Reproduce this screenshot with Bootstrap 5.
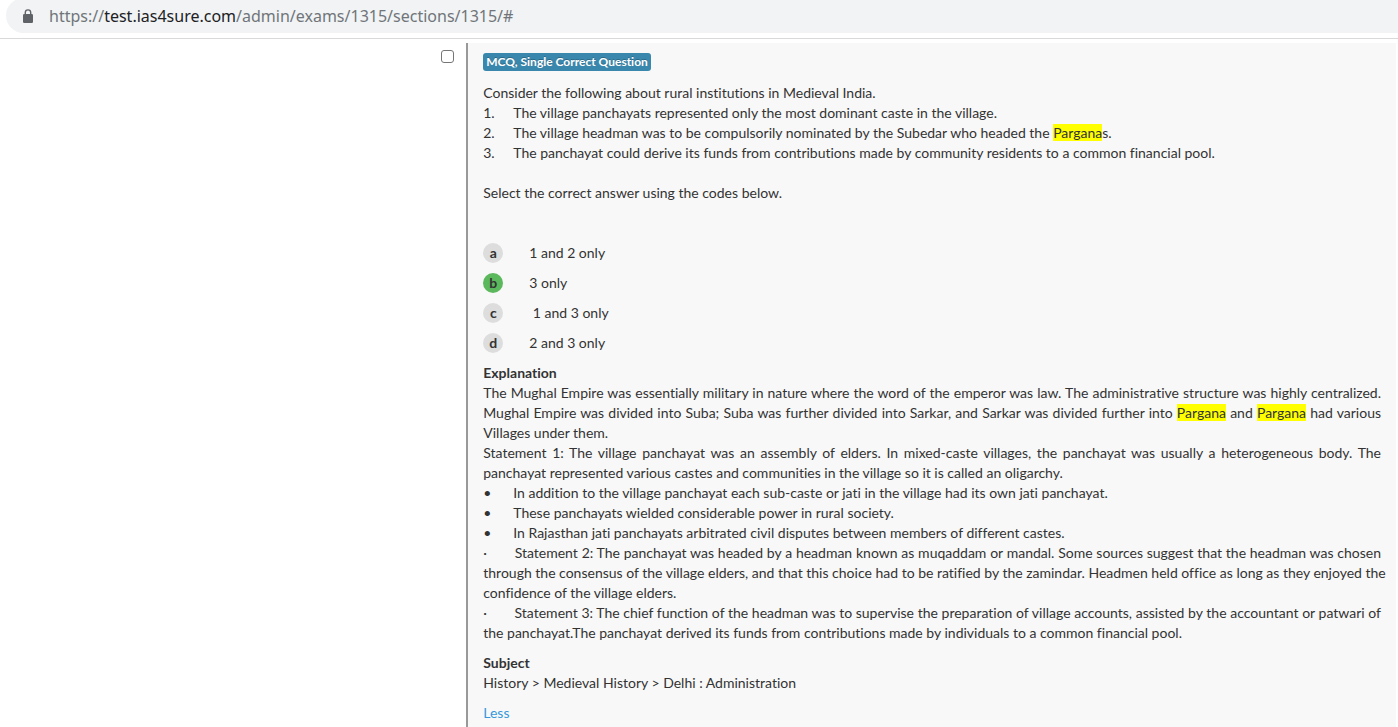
<!DOCTYPE html>
<html lang="en">
<head>
<meta charset="utf-8">
<meta name="viewport" content="width=device-width, initial-scale=1">
<title>Exam sections</title>
<link href="https://cdn.jsdelivr.net/npm/bootstrap@5.3.0/dist/css/bootstrap.min.css" rel="stylesheet">
<style>
  body { font-family: Lato, sans-serif; font-size: 14px; line-height: 20px; font-variant-ligatures: none; color: #333; background: #fff; }
  .browser-bar { height: 39px; border-bottom: 1px solid #d9d9d9; padding-left: 6px; overflow: hidden; }
  .omnibox { height: 35px; margin-top: -2px; padding-left: 17px; gap: 16px; background: #f1f3f4; border-radius: 18px 0 0 18px; }
  .omnibox a { font-family: "Noto Sans", sans-serif; font-size: 16px; line-height: 24px; color: #70757a; }
  .omnibox a span { color: #202124; }
  .content-row { padding: 4px 2px 0 0; }
  .select-cell { width: 33.4%; padding: 7px 12px 0 0; }
  .select-cell .form-check-input { width: 13px; height: 13px; margin: 0; border: 1px solid #767676; border-radius: 3px; }
  .question-panel { min-width: 0; padding: 10px 15px 4px; background: #f8f8f8; border-left: 2px solid #999; }
  .type-label { padding: 2px 3px; font-size: 12px; line-height: 14px; border-radius: 3px; background: #3a87ad; color: #fff; text-shadow: 0 -1px 0 rgba(0,0,0,.25); }
  .type-row { margin-bottom: 12px; }
  .question-ask { margin: 20px 0 40px; }
  .hit { background: #ff0; }
  .marker { width: 30px; flex: none; }
  .option-key { width: 20px; height: 20px; margin-right: 26px; border-radius: 50%; background: #ddd; font-weight: 700; text-align: center; flex: none; }
  .option-key.correct { background: #5cb85c; }
  .options { gap: 10px; margin-bottom: 10px; }
  .explanation p { text-align: justify; }
  .dot-gap { display: inline-block; width: 24px; }
  .subject { margin: 10px 0; }
  .less-link { color: #3498db; }
</style>
</head>
<body class="d-flex flex-column min-vh-100">
<header class="browser-bar">
  <div class="omnibox d-flex align-items-center">
    <svg width="10" height="14" viewBox="0 0 10 14" aria-hidden="true"><path d="M2.3 6V3.6a2.7 2.7 0 0 1 5.4 0V6" fill="none" stroke="#5f6368" stroke-width="1.4"/><rect x="0" y="5" width="10" height="9" rx="1.2" fill="#5f6368"/></svg>
    <a href="#" class="text-decoration-none text-nowrap">https://<span>test.ias4sure.com</span>/admin/exams/1315/sections/1315/#</a>
  </div>
</header>
<main class="content-row d-flex flex-grow-1">
  <div class="select-cell d-flex justify-content-end flex-shrink-0">
    <input class="form-check-input" type="checkbox" aria-label="Select question">
  </div>
  <article class="question-panel flex-grow-1">
    <div class="type-row d-flex"><span class="type-label fw-bold">MCQ, Single Correct Question</span></div>
    <section>
      <p class="m-0">Consider the following about rural institutions in Medieval India.</p>
      <ol class="list-unstyled m-0">
        <li class="d-flex"><span class="marker">1.</span><span>The village panchayats represented only the most dominant caste in the village.</span></li>
        <li class="d-flex"><span class="marker">2.</span><span>The village headman was to be compulsorily nominated by the Subedar who headed the <span class="hit">Pargana</span>s.</span></li>
        <li class="d-flex"><span class="marker">3.</span><span>The panchayat could derive its funds from contributions made by community residents to a common financial pool.</span></li>
      </ol>
      <p class="question-ask">Select the correct answer using the codes below.</p>
    </section>
    <ul class="options list-unstyled d-flex flex-column">
      <li class="d-flex"><span class="option-key">a</span><span>1 and 2 only</span></li>
      <li class="d-flex"><span class="option-key correct">b</span><span>3 only</span></li>
      <li class="d-flex"><span class="option-key">c</span><span>&nbsp;1 and 3 only</span></li>
      <li class="d-flex"><span class="option-key">d</span><span>2 and 3 only</span></li>
    </ul>
    <section class="explanation">
      <div class="fw-bold">Explanation</div>
      <p class="m-0">The Mughal Empire was essentially military in nature where the word of the emperor was law. The administrative structure was highly centralized. Mughal Empire was divided into Suba; Suba was further divided into Sarkar, and Sarkar was divided further into <span class="hit">Pargana</span> and <span class="hit">Pargana</span> had various Villages under them.</p>
      <p class="m-0">Statement 1: The village panchayat was an assembly of elders. In mixed-caste villages, the panchayat was usually a heterogeneous body. The panchayat represented various castes and communities in the village so it is called an oligarchy.</p>
      <ul class="list-unstyled m-0">
        <li class="d-flex"><span class="marker">•</span><span>In addition to the village panchayat each sub-caste or jati in the village had its own jati panchayat.</span></li>
        <li class="d-flex"><span class="marker">•</span><span>These panchayats wielded considerable power in rural society.</span></li>
        <li class="d-flex"><span class="marker">•</span><span>In Rajasthan jati panchayats arbitrated civil disputes between members of different castes.</span></li>
      </ul>
      <p class="m-0">·<span class="dot-gap"></span> Statement 2: The panchayat was headed by a headman known as muqaddam or mandal. Some sources suggest that the headman was chosen <span class="text-nowrap">through the consensus of the village elders, and that this choice had to be ratified by the zamindar. Headmen held office as long as they enjoyed the</span> confidence of the village elders.</p>
      <p class="m-0">·<span class="dot-gap"></span> Statement 3: The chief function of the headman was to supervise the preparation of village accounts, assisted by the accountant or patwari of the panchayat.The panchayat derived its funds from contributions made by individuals to a common financial pool.</p>
    </section>
    <section class="subject">
      <div class="fw-bold">Subject</div>
      <div>History &gt; Medieval History &gt; Delhi : Administration</div>
    </section>
    <a href="#" class="less-link d-inline-block text-decoration-none">Less</a>
  </article>
</main>
<script src="https://cdn.jsdelivr.net/npm/bootstrap@5.3.0/dist/js/bootstrap.bundle.min.js"></script>
</body>
</html>
